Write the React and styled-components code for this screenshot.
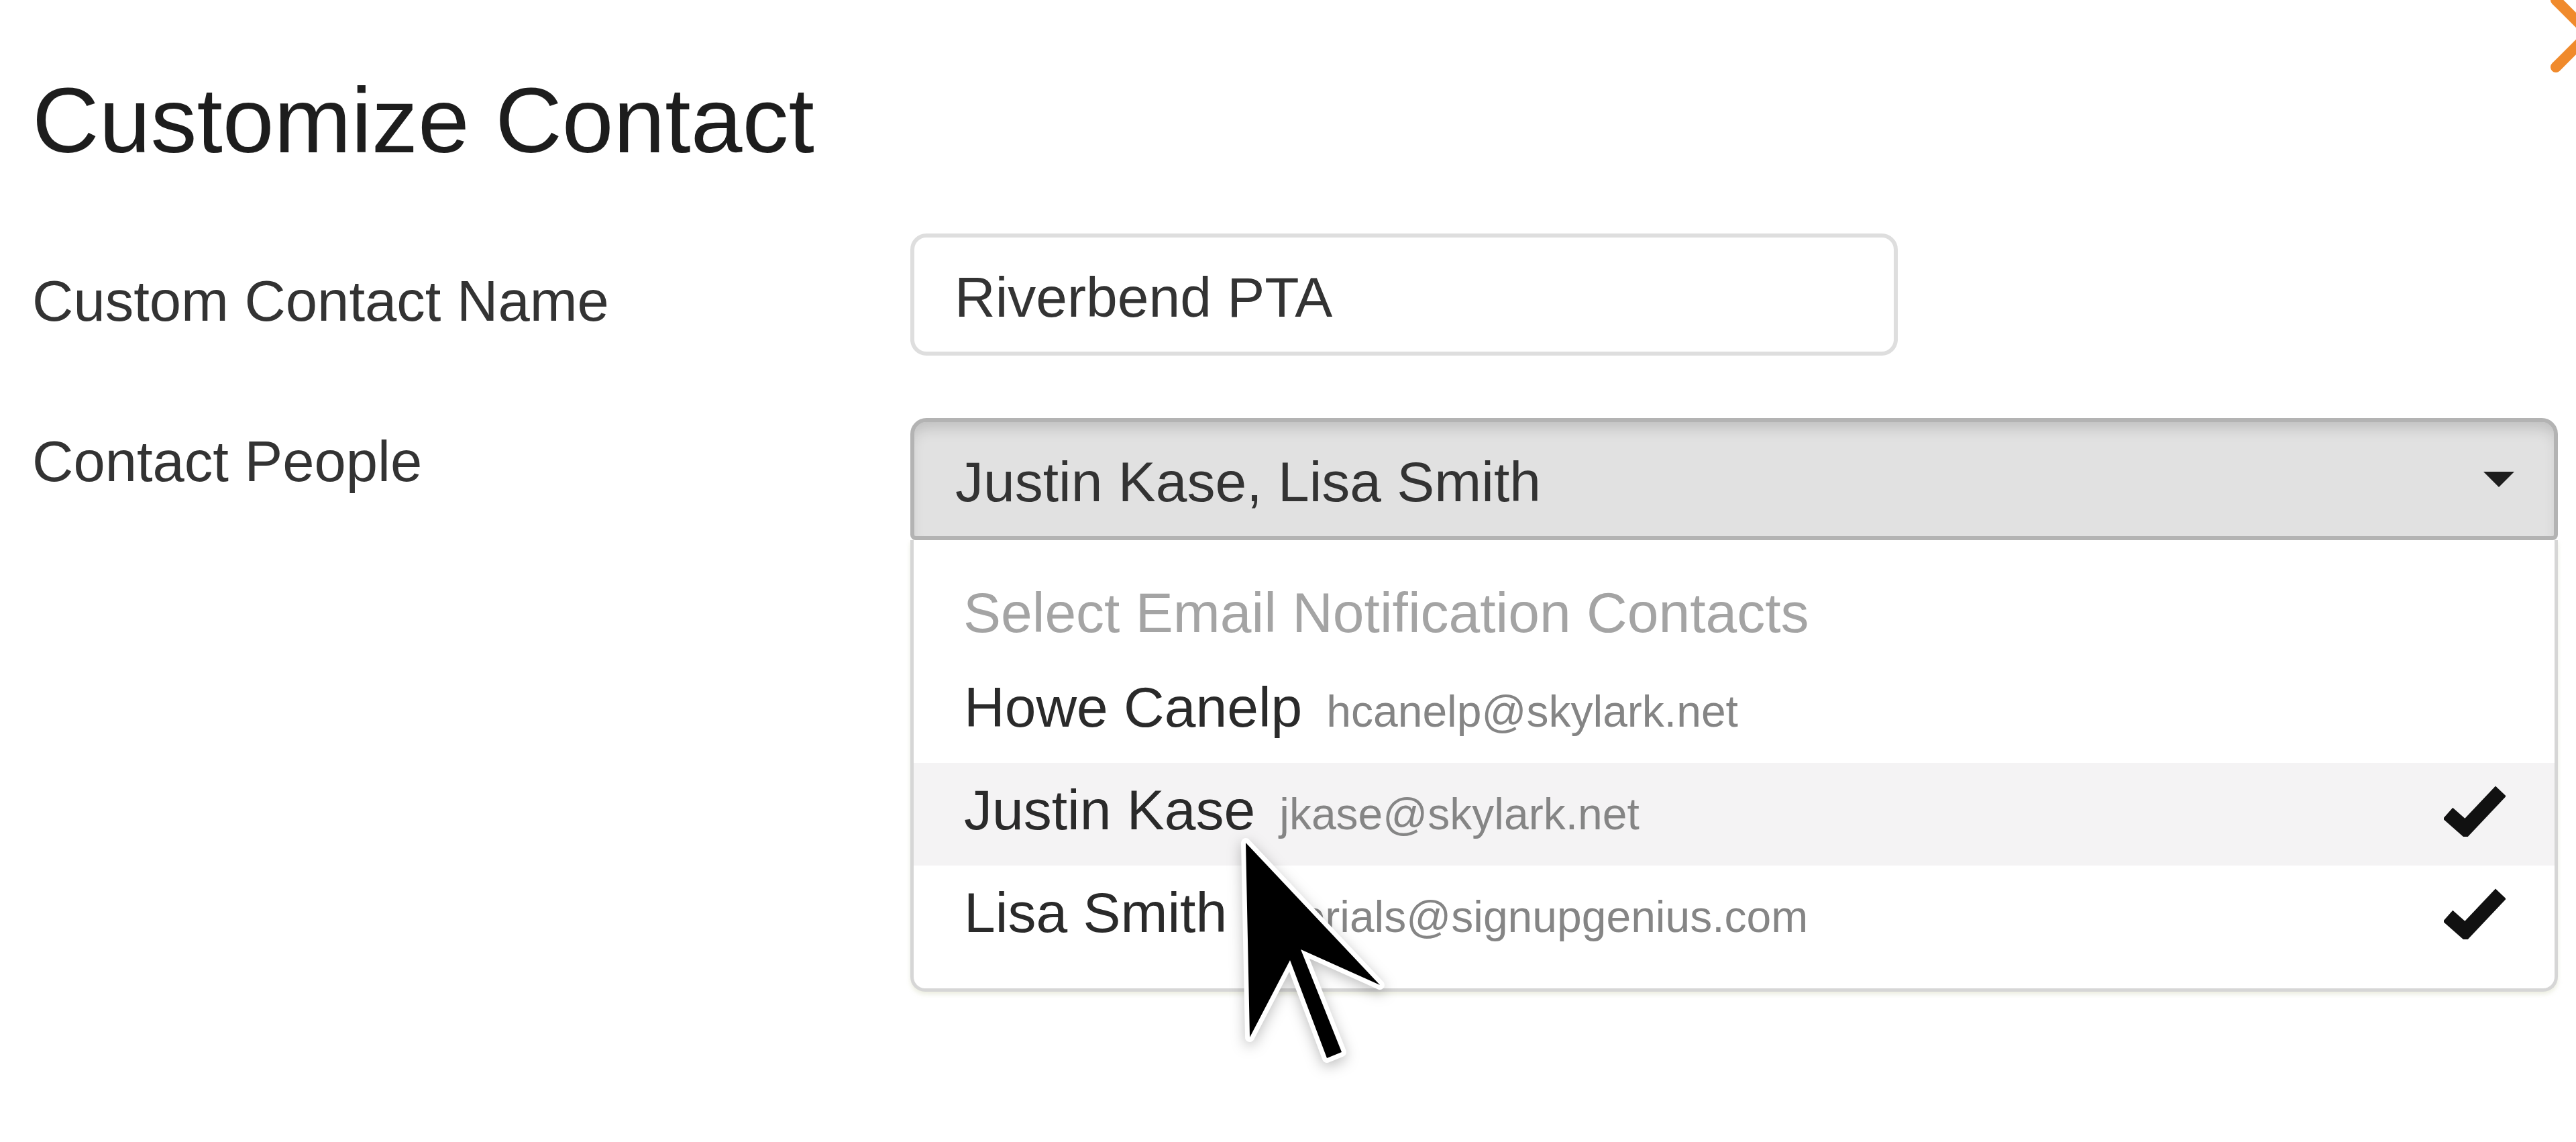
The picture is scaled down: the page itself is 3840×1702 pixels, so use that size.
import React from "react";
import styled, { createGlobalStyle } from "styled-components";

const GlobalStyle = createGlobalStyle`
  html, body { margin: 0; padding: 0; background: #fff; overflow: hidden; }
  body { font-family: "Liberation Sans", Arial, Helvetica, sans-serif; color: #333; }
  #root { width: 3840px; height: 1702px; }
  * { box-sizing: border-box; }
`;

const Page = styled.div`
  position: relative;
  width: 3840px;
  height: 1702px;
  padding: 103px 27px 0 48px;
  overflow: hidden;
  background: #fff;
`;

const Title = styled.h1`
  margin: 0 0 93px;
  font-size: 138px;
  line-height: 152px;
  font-weight: 400;
  color: #1d1d1d;
`;

const FormRow = styled.div`
  display: grid;
  grid-template-columns: 1309px 1fr;
  align-items: start;
  margin-bottom: ${(p) => p.$gap || 0}px;
`;

const Label = styled.label`
  display: block;
  font-size: 85px;
  line-height: 120px;
  padding-top: ${(p) => p.$offset || 0}px;
  color: #333;
`;

const TextInput = styled.input`
  display: block;
  width: 1472px;
  height: 182px;
  margin: 0;
  border: 6px solid #dedede;
  border-radius: 24px;
  padding: 8px 56px 0 60px;
  font-family: inherit;
  font-size: 84px;
  color: #333;
  background: #fff;
  outline: none;
`;

const SelectGroup = styled.div`
  display: flex;
  flex-direction: column;
  width: 2456px;
`;

const SelectButton = styled.div`
  display: flex;
  align-items: center;
  justify-content: space-between;
  height: 182px;
  padding: 8px 59px 0 61px;
  border: 6px solid #b3b3b3;
  border-radius: 24px 24px 8px 8px;
  background: #e1e1e1;
  box-shadow: inset 0 16px 22px -8px rgba(0, 0, 0, 0.16);
  font-size: 84px;
  color: #333;
`;

const Caret = styled.span`
  width: 0;
  height: 0;
  margin-bottom: 8px;
  border-left: 23px solid transparent;
  border-right: 23px solid transparent;
  border-top: 23px solid #1e1e1e;
`;

const Menu = styled.div`
  display: flex;
  flex-direction: column;
  padding: 26px 0 30px;
  border: 5px solid #d6d6d6;
  border-top: none;
  border-radius: 0 0 22px 22px;
  background: #fff;
  box-shadow: 0 4px 6px rgba(200, 205, 170, 0.35);
`;

const MenuHeader = styled.div`
  display: flex;
  align-items: center;
  height: 153px;
  padding: 12px 74px 0;
  font-size: 84px;
  color: #a4a4a4;
`;

const MenuItem = styled.div`
  display: flex;
  align-items: center;
  justify-content: space-between;
  height: 153px;
  padding: 0 73px 12px 75px;
  background: ${(p) => (p.$active ? "#f4f3f4" : "#fff")};
  font-size: 84px;
  color: #2a2a2a;
`;

const ItemText = styled.span`
  display: flex;
  align-items: baseline;
  white-space: nowrap;
`;

const Email = styled.small`
  margin-left: 36px;
  font-size: 66px;
  color: #858585;
`;

const CheckIcon = styled.svg`
  display: block;
  width: 92px;
  height: 78px;
  flex: none;
`;

const Cursor = styled.svg`
  position: absolute;
  left: 1835px;
  top: 1234px;
  width: 260px;
  height: 370px;
  filter: drop-shadow(0 6px 10px rgba(0, 0, 0, 0.25));
  pointer-events: none;
`;

const CloseX = styled.svg`
  position: absolute;
  left: 3790px;
  top: -20px;
  width: 140px;
  height: 140px;
`;

const Check = () => (
  <CheckIcon viewBox="0 0 92 78">
    <polyline
      points="6,43 32,66 85,10"
      fill="none"
      stroke="#111"
      strokeWidth="22"
      strokeLinejoin="miter"
    />
  </CheckIcon>
);

const contacts = [
  { name: "Howe Canelp", email: "hcanelp@skylark.net", checked: false },
  { name: "Justin Kase", email: "jkase@skylark.net", checked: true, active: true },
  { name: "Lisa Smith", email: "tutorials@signupgenius.com", checked: true },
];

export default function App() {
  return (
    <>
      <GlobalStyle />
      <Page>
        <Title>Customize Contact</Title>
        <FormRow $gap={93}>
          <Label $offset={41}>Custom Contact Name</Label>
          <TextInput readOnly value="Riverbend PTA" />
        </FormRow>
        <FormRow>
          <Label $offset={5}>Contact People</Label>
          <SelectGroup>
            <SelectButton>
              <span>Justin Kase, Lisa Smith</span>
              <Caret />
            </SelectButton>
            <Menu>
              <MenuHeader>Select Email Notification Contacts</MenuHeader>
              {contacts.map((c) => (
                <MenuItem key={c.name} $active={c.active}>
                  <ItemText>
                    {c.name}
                    <Email>{c.email}</Email>
                  </ItemText>
                  {c.checked && <Check />}
                </MenuItem>
              ))}
            </Menu>
          </SelectGroup>
        </FormRow>
        <Cursor viewBox="0 0 260 370">
          <path
            d="M22 22 L222 234 L104 181 L165 334 L143 343 L88 197 L28 312 Z"
            fill="#000"
            stroke="#fff"
            strokeWidth="14"
            strokeLinejoin="round"
            paintOrder="stroke"
          />
        </Cursor>
        <CloseX viewBox="0 0 140 140">
          <line x1="20" y1="20" x2="120" y2="120" stroke="#f08a2c" strokeWidth="16" strokeLinecap="round" />
          <line x1="20" y1="120" x2="120" y2="20" stroke="#f08a2c" strokeWidth="16" strokeLinecap="round" />
        </CloseX>
      </Page>
    </>
  );
}
